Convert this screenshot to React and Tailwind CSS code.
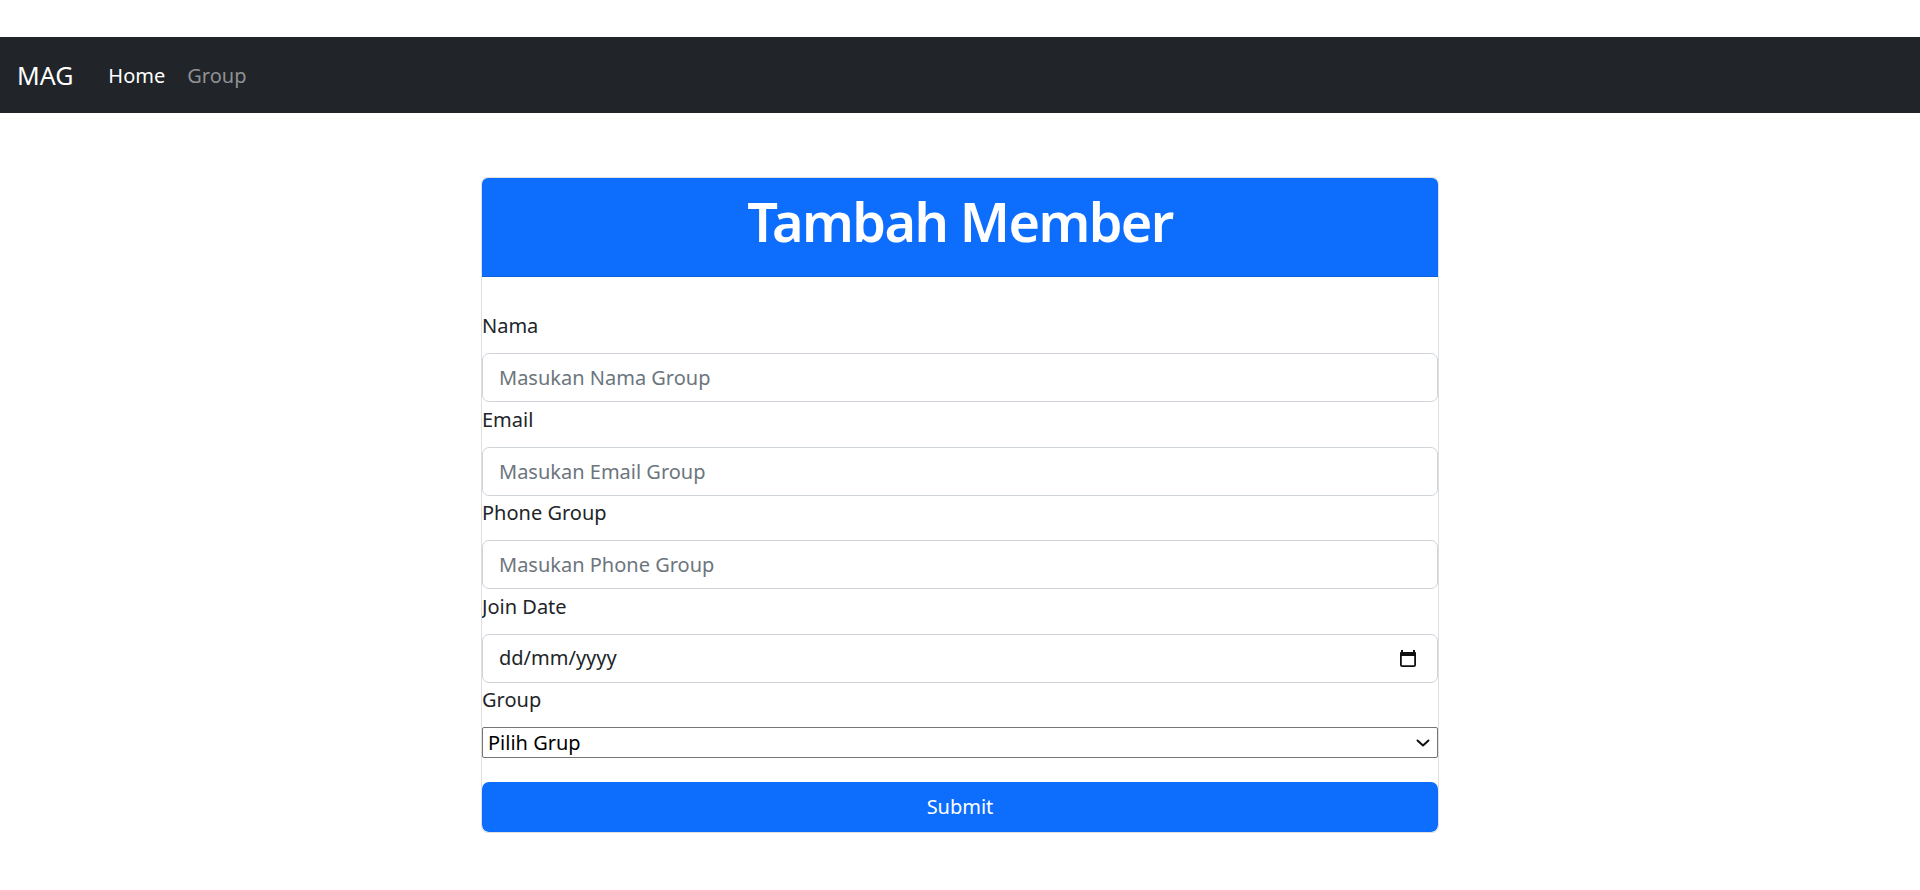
import React from "react";

function CalendarIcon() {
  return (
    <svg width="18" height="19" viewBox="0 0 18 19" className="block">
      <rect x="2" y="1" width="2" height="3" fill="#111" />
      <rect x="14" y="1" width="2" height="3" fill="#111" />
      <rect x="1" y="3" width="16" height="4" rx="1" fill="#111" />
      <rect x="1.9" y="3.9" width="14.2" height="13.2" rx="1.2" fill="none" stroke="#111" strokeWidth="1.8" />
    </svg>
  );
}

function Chevron() {
  return (
    <svg width="14" height="8" viewBox="0 0 14 8" className="block">
      <path d="M1.5 1.5 L7 6.5 L12.5 1.5" fill="none" stroke="#111" strokeWidth="2" strokeLinecap="round" strokeLinejoin="round" />
    </svg>
  );
}

function Label({ children }) {
  return (
    <div className="pt-[2.5px] pb-[12px]">
      <label className="block text-[20px] leading-[30px] text-[#212529]">{children}</label>
    </div>
  );
}

function TextField({ label, placeholder }) {
  return (
    <div>
      <Label>{label}</Label>
      <input
        type="text"
        placeholder={placeholder}
        className="block w-full h-[49px] border border-[#ced4da] rounded-[7px] px-[16px] text-[20px] text-[#212529] placeholder:text-[#6c757d] bg-white outline-none"
        style={{ fontFamily: '"Noto Sans", sans-serif' }}
      />
    </div>
  );
}

export default function App() {
  return (
    <div className="min-h-[890px] bg-white" style={{ fontFamily: '"Noto Sans", "Open Sans", sans-serif' }}>
      <nav className="mt-[37px] h-[76px] bg-[#212529] flex items-center pl-[17px]">
        <span className="text-[25px] leading-[37px] text-white">MAG</span>
        <span className="ml-[35px] text-[20px] leading-[30px] text-white pt-[2px]">Home</span>
        <span className="ml-[22px] text-[20px] leading-[30px] text-[#8f9194] pt-[2px]">Group</span>
      </nav>

      <div className="mt-[64px] mx-auto w-[958px] border border-[#dfdfdf] rounded-[7px] overflow-hidden">
        <div className="h-[99px] bg-[#0d6efd] border-b border-[#0b5fd9] pt-[11px] text-center">
          <h1 className="text-[54px] leading-[65px] font-semibold tracking-[-1.6px] text-white">Tambah Member</h1>
        </div>
        <div className="pt-[31.5px]">
          <TextField label="Nama" placeholder="Masukan Nama Group" />
          <TextField label="Email" placeholder="Masukan Email Group" />
          <TextField label="Phone Group" placeholder="Masukan Phone Group" />
          <div>
            <Label>Join Date</Label>
            <div className="flex items-center justify-between w-full h-[49px] border border-[#ced4da] rounded-[7px] pl-[16px] pr-[20px] bg-white">
              <span className="text-[20px] text-[#212529]">dd/mm/yyyy</span>
              <CalendarIcon />
            </div>
          </div>
          <div>
            <Label>Group</Label>
            <div className="flex items-center justify-between w-full h-[31px] border border-[#767676] rounded-[2px] pl-[5px] pr-[7px] bg-white">
              <span className="text-[20px] leading-[28px] text-black">Pilih Grup</span>
              <Chevron />
            </div>
          </div>
          <button className="mt-[23.5px] block w-full h-[50px] bg-[#0d6efd] rounded-[7px] text-white text-[20px]">
            Submit
          </button>
        </div>
      </div>
    </div>
  );
}
